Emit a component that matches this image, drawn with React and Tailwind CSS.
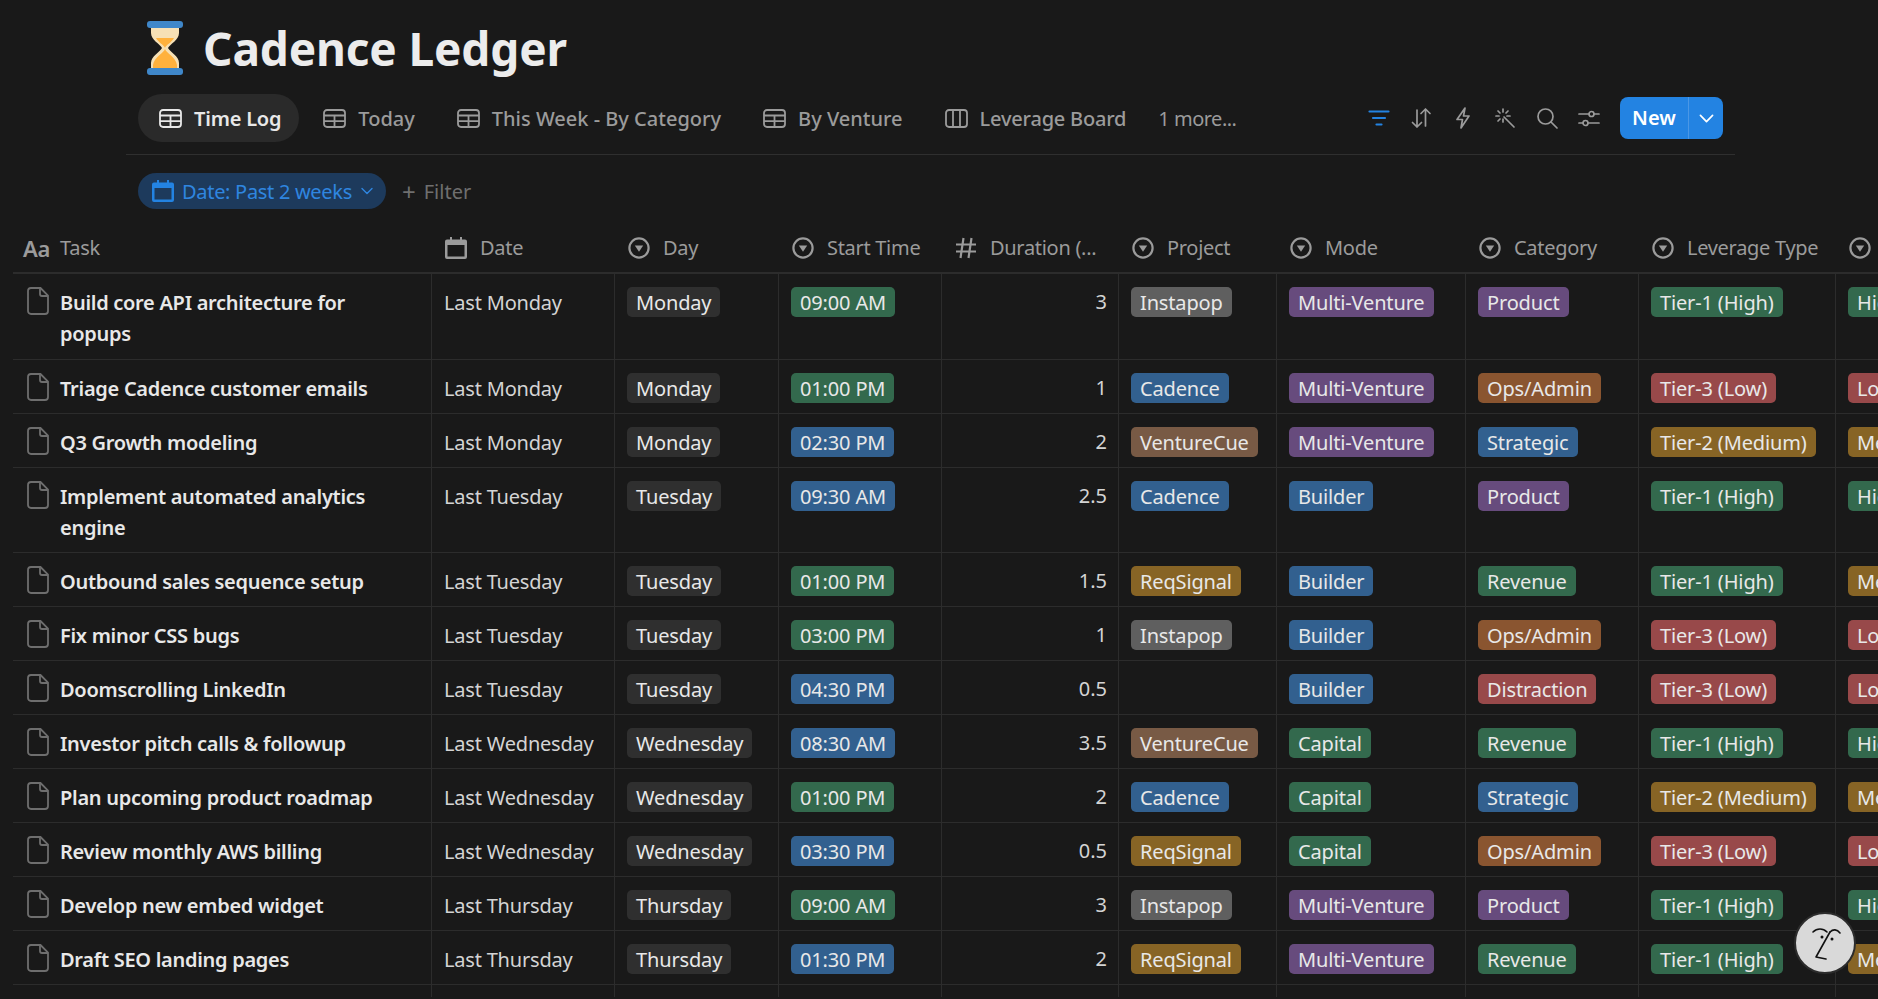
import React from "react";

const tagColors = {
  plain: "bg-[#2f2f2f]",
  gray: "bg-[#5f5f5f]",
  green: "bg-[#33694d]",
  blue: "bg-[#32608f]",
  purple: "bg-[#674b7d]",
  orange: "bg-[#8a5530]",
  red: "bg-[#98494a]",
  yellow: "bg-[#876425]",
  brown: "bg-[#785a45]",
};

const projects = {
  Instapop: "gray",
  Cadence: "blue",
  VentureCue: "brown",
  ReqSignal: "yellow",
};
const modes = { "Multi-Venture": "purple", Builder: "blue", Capital: "green" };
const categories = {
  Product: "purple",
  "Ops/Admin": "orange",
  Strategic: "blue",
  Revenue: "green",
  Distraction: "red",
};
const leverage = {
  "Tier-1 (High)": "green",
  "Tier-2 (Medium)": "yellow",
  "Tier-3 (Low)": "red",
};
const levels = { High: "green", Medium: "yellow", Low: "red" };

// last field: row height
const rows = [
  ["Build core API architecture for popups", "Last Monday", "Monday", "09:00 AM", "green", "3", "Instapop", "Multi-Venture", "Product", "Tier-1 (High)", "High", "h-[86px]"],
  ["Triage Cadence customer emails", "Last Monday", "Monday", "01:00 PM", "green", "1", "Cadence", "Multi-Venture", "Ops/Admin", "Tier-3 (Low)", "Low"],
  ["Q3 Growth modeling", "Last Monday", "Monday", "02:30 PM", "blue", "2", "VentureCue", "Multi-Venture", "Strategic", "Tier-2 (Medium)", "Medium"],
  ["Implement automated analytics engine", "Last Tuesday", "Tuesday", "09:30 AM", "blue", "2.5", "Cadence", "Builder", "Product", "Tier-1 (High)", "High", "h-[85px]"],
  ["Outbound sales sequence setup", "Last Tuesday", "Tuesday", "01:00 PM", "green", "1.5", "ReqSignal", "Builder", "Revenue", "Tier-1 (High)", "Medium"],
  ["Fix minor CSS bugs", "Last Tuesday", "Tuesday", "03:00 PM", "green", "1", "Instapop", "Builder", "Ops/Admin", "Tier-3 (Low)", "Low"],
  ["Doomscrolling LinkedIn", "Last Tuesday", "Tuesday", "04:30 PM", "blue", "0.5", "", "Builder", "Distraction", "Tier-3 (Low)", "Low"],
  ["Investor pitch calls & followup", "Last Wednesday", "Wednesday", "08:30 AM", "blue", "3.5", "VentureCue", "Capital", "Revenue", "Tier-1 (High)", "High"],
  ["Plan upcoming product roadmap", "Last Wednesday", "Wednesday", "01:00 PM", "green", "2", "Cadence", "Capital", "Strategic", "Tier-2 (Medium)", "Medium"],
  ["Review monthly AWS billing", "Last Wednesday", "Wednesday", "03:30 PM", "blue", "0.5", "ReqSignal", "Capital", "Ops/Admin", "Tier-3 (Low)", "Low"],
  ["Develop new embed widget", "Last Thursday", "Thursday", "09:00 AM", "green", "3", "Instapop", "Multi-Venture", "Product", "Tier-1 (High)", "High"],
  ["Draft SEO landing pages", "Last Thursday", "Thursday", "01:30 PM", "blue", "2", "ReqSignal", "Multi-Venture", "Revenue", "Tier-1 (High)", "Medium"],
];

const gridCols =
  "grid grid-cols-[419px_183px_164px_163px_177px_158px_189px_173px_197px_240px]";

const Hourglass = () => (
  <svg width="36" height="54" viewBox="0 0 36 54" className="shrink-0">
    <path d="M4 4h28v8c0 7-9 11-11 15 2 4 11 8 11 15v8H4v-8c0-7 9-11 11-15C13 23 4 19 4 12z" fill="#f6e0b5" />
    <path d="M9 17h18c-2 4-8 7-9 10-1-3-7-6-9-10z" fill="#ffb13d" />
    <path d="M18 28c1 4 11 8 12 16v6H6v-6c1-8 11-12 12-16z" fill="#ffb13d" />
    <rect x="0" y="0" width="36" height="7" rx="3" fill="#3f87c9" />
    <rect x="0" y="47" width="36" height="7" rx="3" fill="#3f87c9" />
  </svg>
);

const TableIcon = ({ color = "#9b9b9b" }) => (
  <svg width="23" height="19" viewBox="0 0 23 19" fill="none" stroke={color} strokeWidth="1.8" className="shrink-0">
    <rect x="1" y="1" width="21" height="17" rx="3" />
    <path d="M1 6.500h21M1 12.200h21M11.500 6.500V18" />
  </svg>
);

const BoardIcon = () => (
  <svg width="23" height="19" viewBox="0 0 23 19" fill="none" stroke="#9b9b9b" strokeWidth="1.8" className="shrink-0">
    <rect x="1" y="1" width="21" height="17" rx="3" />
    <path d="M8 1v17M15 1v17" />
  </svg>
);

const CalendarIcon = ({ color }) => (
  <svg width="22" height="22" viewBox="0 0 22 22" fill={color} className="shrink-0">
    <path fillRule="evenodd" d="M5 0h2v2.500h8V0h2v2.500h3a2 2 0 0 1 2 2V20a2 2 0 0 1-2 2H2a2 2 0 0 1-2-2V4.500a2 2 0 0 1 2-2h3zM2.500 8v11.500h17V8z" />
  </svg>
);

const SelectIcon = () => (
  <svg width="22" height="22" viewBox="0 0 22 22" fill="none" className="shrink-0">
    <circle cx="11" cy="11" r="9.600" stroke="#9b9b9b" strokeWidth="2.200" />
    <path d="M6.800 8.600h8.400L11 14.800z" fill="#9b9b9b" />
  </svg>
);

const HashIcon = () => (
  <svg width="22" height="22" viewBox="0 0 22 22" fill="none" stroke="#9b9b9b" strokeWidth="2.200" className="shrink-0">
    <path d="M1 7.500h20M1 14.500h20M8.500 1 5.500 21M16.500 1l-3 20" />
  </svg>
);

const PageIcon = () => (
  <svg width="22" height="28" viewBox="0 0 22 28" fill="none" stroke="#6e6e6e" strokeWidth="1.800" className="shrink-0">
    <path d="M4 1h9.500L21 8.500V24a3 3 0 0 1-3 3H4a3 3 0 0 1-3-3V4a3 3 0 0 1 3-3z" />
    <path d="M13 1v6a2 2 0 0 0 2 2h6" />
  </svg>
);

const ToolIcon = ({ children, color = "#9b9b9b" }) => (
  <svg width="22" height="22" viewBox="0 0 22 22" fill="none" stroke={color} strokeWidth="1.700" strokeLinecap="round" strokeLinejoin="round" className="shrink-0">
    {children}
  </svg>
);

const Chevron = ({ color, size = 14 }) => (
  <svg width={size} height={size} viewBox="0 0 14 14" fill="none" stroke={color} strokeWidth="1.400" strokeLinecap="round" strokeLinejoin="round" className="shrink-0">
    <path d="M2 4.500 7 9.500l5-5" />
  </svg>
);

const Tag = ({ color, children }) => (
  <span className={`inline-flex h-[30px] items-center rounded-[5px] px-[9px] pt-[1px] text-[20px] tracking-[-0.15px] whitespace-nowrap text-[#e8e8e8] ${tagColors[color]}`}>
    {children}
  </span>
);

const Cell = ({ children, extra = "" }) => (
  <div className={`border-r border-[#2c2c2c] pt-[13px] pl-[12px] ${extra}`}>{children}</div>
);

const HeaderCell = ({ icon, label }) => (
  <div className="flex items-center gap-[13px] pt-[2px] pl-[13px] text-[20px] tracking-[-0.3px] text-[#9b9b9b] whitespace-nowrap">
    {icon}
    {label && <span>{label}</span>}
  </div>
);

const Tab = ({ label, active, board }) => (
  <div className={`flex h-[48px] items-center gap-[12px] rounded-[24px] pr-[18px] pl-[21px] text-[20px] ${active ? "bg-[#2a2a2a] font-semibold tracking-[-0.2px] text-[#e8e8e8]" : "font-medium text-[#9b9b9b]"} ${board ? "tracking-[-0.2px]" : ""}`}>
    {board ? <BoardIcon /> : <TableIcon color={active ? "#e8e8e8" : "#9b9b9b"} />}
    <span className="pt-[2px] whitespace-nowrap">{label}</span>
  </div>
);

export default function App() {
  return (
    <div className="relative h-[999px] overflow-hidden bg-[#191919] font-['Noto_Sans',sans-serif] text-[#d4d4d4]">
      <div className="ml-[126px] w-[1609px]">
        <div className="flex items-center gap-[20px] pt-[21px] pl-[21px]">
          <Hourglass />
          <h1 className="text-[46px] leading-[54px] font-bold tracking-[-0.15px] text-[#ececec]">Cadence Ledger</h1>
        </div>

        <div className="mt-[19px] flex items-center border-b border-[#2f2f2f] pr-[12px] pb-[12px] pl-[12px]">
          <div className="flex items-center gap-[3px]">
            <Tab label="Time Log" active />
            <Tab label="Today" />
            <Tab label="This Week - By Category" />
            <Tab label="By Venture" />
            <Tab label="Leverage Board" board />
            <span className="ml-[11px] pt-[2px] text-[20px] tracking-[-0.5px] text-[#9b9b9b]">1 more...</span>
          </div>
          <div className="ml-auto flex items-center gap-[20px]">
            <ToolIcon color="#2383e2">
              <path d="M1.500 4.500h19M5 11h12M8.500 17.500h5" strokeWidth="2.200" />
            </ToolIcon>
            <ToolIcon>
              <path d="M7 20V3M2.500 15.500 7 20l4.500-4.500M15.500 2v17M11 6.500 15.500 2 20 6.500" />
            </ToolIcon>
            <ToolIcon>
              <path d="M13 1 5 12.500h5.500L9 21l8-12h-5.500z" />
            </ToolIcon>
            <ToolIcon>
              <path d="M9 2v3M9 12v3M2 9h3M13 9h3M4 4l2 2M14 4l-2 2M4 14l2-2M10 10l10 10" />
            </ToolIcon>
            <ToolIcon>
              <circle cx="9.500" cy="9.500" r="7.500" />
              <path d="m15 15 6 6" />
            </ToolIcon>
            <ToolIcon>
              <path d="M1 7h10M16 7h5M1 16h4M10 16h11" />
              <circle cx="13.500" cy="7" r="2.500" />
              <circle cx="7.500" cy="16" r="2.500" />
            </ToolIcon>
            <div className="flex h-[42px] w-[103px] items-stretch overflow-hidden rounded-[8px] bg-[#2383e2] text-white">
              <span className="flex w-[68px] items-center justify-center text-[20px] font-semibold">New</span>
              <span className="flex flex-1 items-center justify-center border-l border-[#4a97e6]">
                <Chevron color="#ffffff" size={17} />
              </span>
            </div>
          </div>
        </div>

        <div className="mt-[18px] flex items-center gap-[16px] pl-[12px]">
          <div className="flex h-[36px] items-center gap-[8px] rounded-[18px] bg-[#1d3a5c] pr-[12px] pl-[14px] text-[20px] tracking-[-0.3px] text-[#2f86e0]">
            <CalendarIcon color="#2383e2" />
            <span className="pt-[2px] whitespace-nowrap">Date: Past 2 weeks</span>
            <Chevron color="#2f86e0" />
          </div>
          <div className="flex items-center gap-[8px] pt-[2px] text-[20px] text-[#6f6f6f]">
            <span className="text-[24px] leading-none">+</span>
            <span>Filter</span>
          </div>
        </div>
      </div>

      <div className="mt-[13px] ml-[13px]">
        <div className={`${gridCols} h-[52px] border-b-2 border-[#2c2c2c]`}>
          <div className="flex items-center gap-[10px] pt-[2px] pl-[10px] text-[20px] tracking-[-0.3px] text-[#9b9b9b]">
            <span className="text-[22px] font-semibold">Aa</span>
            <span>Task</span>
          </div>
          <HeaderCell icon={<CalendarIcon color="#9b9b9b" />} label="Date" />
          <HeaderCell icon={<SelectIcon />} label="Day" />
          <HeaderCell icon={<SelectIcon />} label="Start Time" />
          <HeaderCell icon={<HashIcon />} label="Duration (..." />
          <HeaderCell icon={<SelectIcon />} label="Project" />
          <HeaderCell icon={<SelectIcon />} label="Mode" />
          <HeaderCell icon={<SelectIcon />} label="Category" />
          <HeaderCell icon={<SelectIcon />} label="Leverage Type" />
          <HeaderCell icon={<SelectIcon />} />
        </div>

        {rows.map((row, key) => (
          <div key={key} className={`${gridCols} border-b border-[#2c2c2c] ${row[11] || "h-[54px]"}`}>
            <div className="flex gap-[11px] border-r border-[#2c2c2c] pt-[13px] pr-[20px] pl-[14px]">
              <PageIcon />
              <span className="text-[20px] leading-[31px] font-semibold tracking-[-0.28px] text-[#e8e8e8]">{row[0]}</span>
            </div>
            <Cell extra="text-[20px] leading-[32px] tracking-[-0.2px]">{row[1]}</Cell>
            <Cell><Tag color="plain">{row[2]}</Tag></Cell>
            <Cell><Tag color={row[4]}>{row[3]}</Tag></Cell>
            <Cell extra="pr-[11px] text-right text-[20px] leading-[30px]">{row[5]}</Cell>
            <Cell>{row[6] && <Tag color={projects[row[6]]}>{row[6]}</Tag>}</Cell>
            <Cell><Tag color={modes[row[7]]}>{row[7]}</Tag></Cell>
            <Cell><Tag color={categories[row[8]]}>{row[8]}</Tag></Cell>
            <Cell><Tag color={leverage[row[9]]}>{row[9]}</Tag></Cell>
            <Cell><Tag color={levels[row[10]]}>{row[10]}</Tag></Cell>
          </div>
        ))}
        <div className={`${gridCols} h-[12px]`}>
          {[0, 1, 2, 3, 4, 5, 6, 7, 8].map((i) => (
            <div key={i} className="border-r border-[#2c2c2c]" />
          ))}
        </div>
      </div>

      <div className="absolute top-[912px] left-[1794px] flex h-[62px] w-[62px] items-center justify-center rounded-full border-2 border-[#2c2c2c] bg-[#d9d9d9]">
        <svg width="34" height="38" viewBox="0 0 34 38" fill="none" stroke="#111" strokeWidth="1.600" strokeLinecap="round" strokeLinejoin="round">
          <path d="M5 8c4-4 10-4 14 0M22 8c3-3 7-3 10 1" />
          <path d="M22 8 8 33l10 2" />
          <circle cx="14" cy="13" r="1.500" fill="#111" stroke="none" />
          <circle cx="24" cy="15" r="1.500" fill="#111" stroke="none" />
        </svg>
      </div>
    </div>
  );
}
